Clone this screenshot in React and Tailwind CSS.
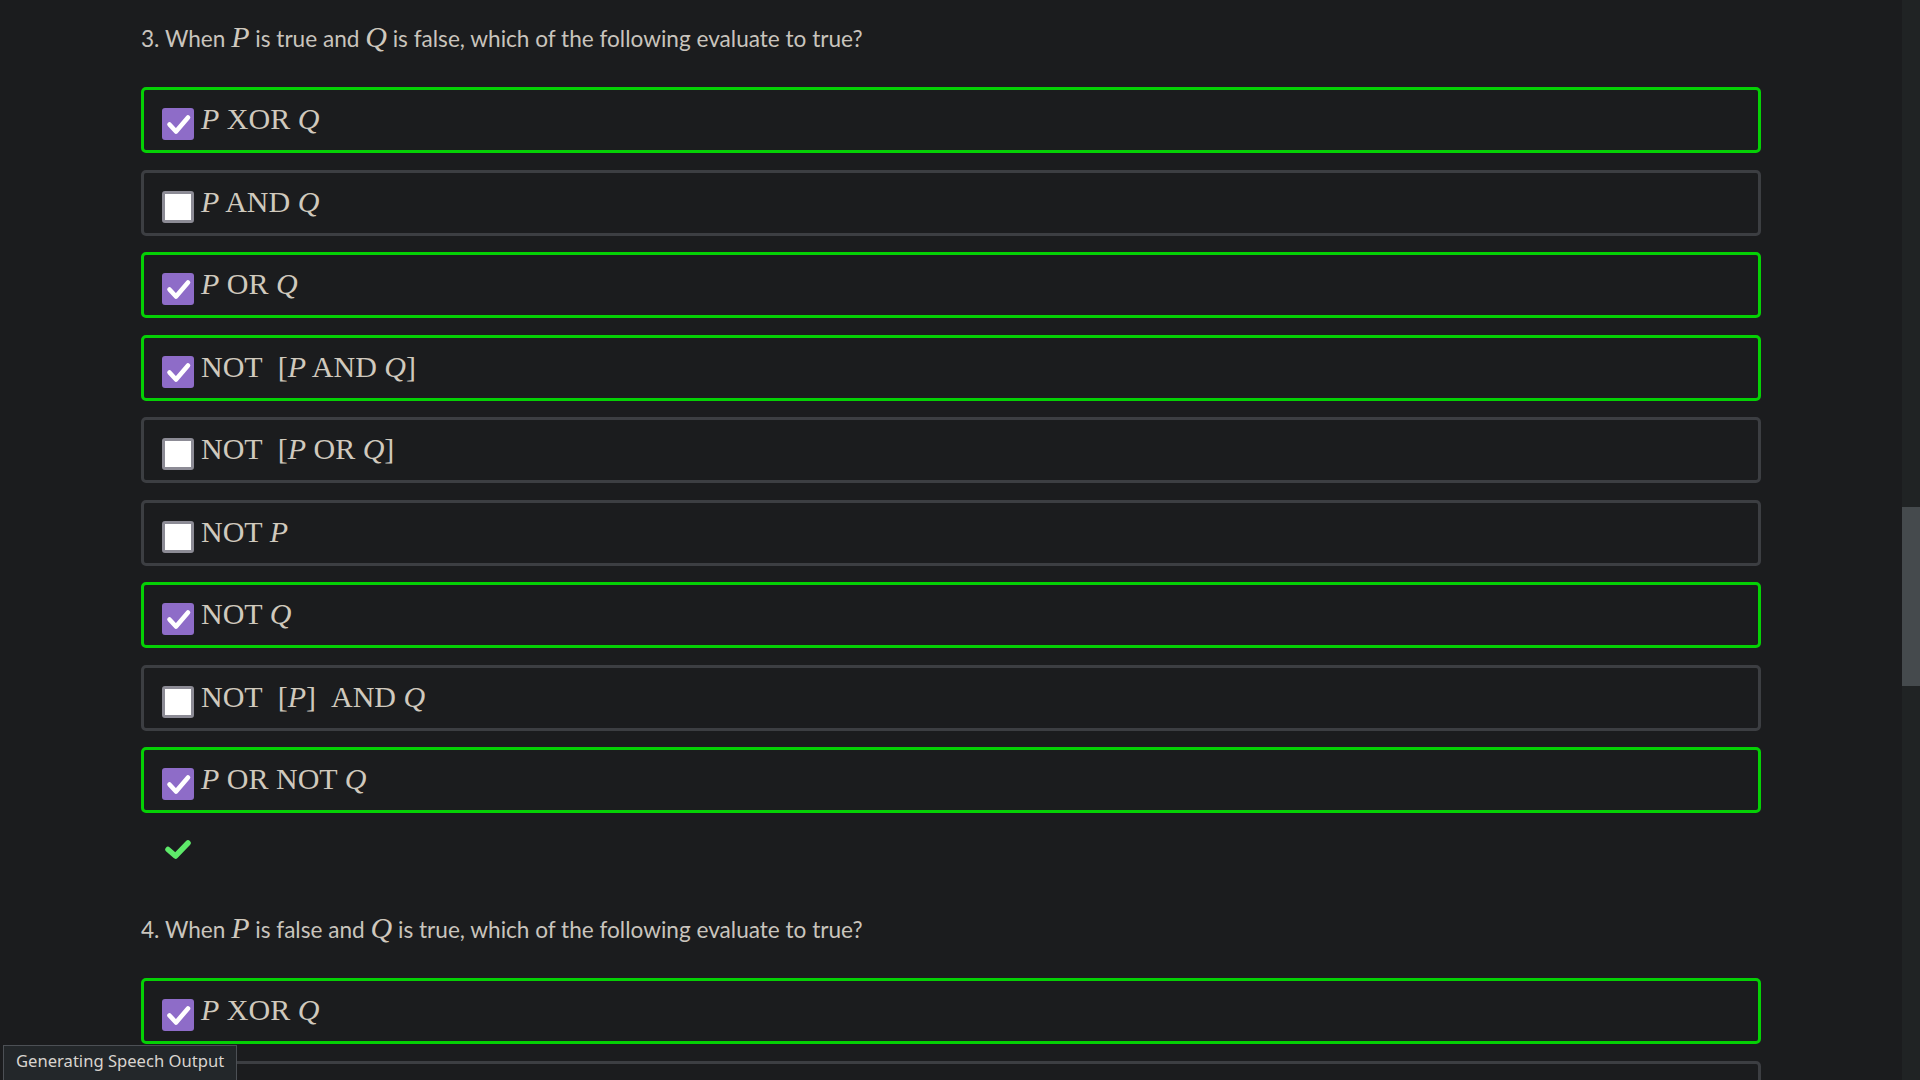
import React from "react";

const I = ({ children }) => <span className="italic">{children}</span>;

const opts3 = [
  { c: true, t: <><I>P</I> XOR <I>Q</I></> },
  { c: false, t: <><I>P</I> AND <I>Q</I></> },
  { c: true, t: <><I>P</I> OR <I>Q</I></> },
  { c: true, t: <>NOT{"\u00a0\u00a0"}[<I>P</I> AND <I>Q</I>]</> },
  { c: false, t: <>NOT{"\u00a0\u00a0"}[<I>P</I> OR <I>Q</I>]</> },
  { c: false, t: <>NOT <I>P</I></> },
  { c: true, t: <>NOT <I>Q</I></> },
  { c: false, t: <>NOT{"\u00a0\u00a0"}[<I>P</I>]{"\u00a0\u00a0"}AND <I>Q</I></> },
  { c: true, t: <><I>P</I> OR NOT <I>Q</I></> },
];

function Box({ checked }) {
  if (checked) {
    return (
      <div className="w-[32px] h-[32px] shrink-0 rounded-[3px] bg-[#8e6cc8] flex items-center justify-center">
        <svg width="32" height="32" viewBox="0 0 32 32">
          <polyline points="7.5,16.5 14,23.5 26,9.5" fill="none" stroke="#ffffff" strokeWidth="4.6" strokeLinecap="round" strokeLinejoin="round" />
        </svg>
      </div>
    );
  }
  return <div className="w-[32px] h-[32px] shrink-0 rounded-[3px] bg-white border-[3px] border-[#8c8b95]" />;
}

function Option({ c, t }) {
  return (
    <div className={`h-[66px] shrink-0 rounded-[5px] border-[3px] ${c ? "border-[#05d005]" : "border-[#3c3e42]"} flex items-start pl-[18px] pt-[18px]`}>
      <Box checked={c} />
      <div className="ml-[7px] text-[30px] leading-[22px] text-[#d0c9bd] whitespace-pre" style={{ fontFamily: '"Liberation Serif", "DejaVu Serif", serif' }}>
        {t}
      </div>
    </div>
  );
}

function Question({ n, a, b }) {
  return (
    <p className="h-[36px] text-[22.6px] leading-[36px] text-[#c9c4bd] whitespace-nowrap" style={{ fontFamily: 'Lato, "Noto Sans", sans-serif' }}>
      {n}. When{" "}
      <span className="italic text-[30px] leading-none text-[#cfc8bd]" style={{ fontFamily: '"Liberation Serif", serif' }}>P</span>{" "}
      is {a} and{" "}
      <span className="italic text-[30px] leading-none text-[#cfc8bd]" style={{ fontFamily: '"Liberation Serif", serif' }}>Q</span>{" "}
      is {b}, which of the following evaluate to true?
    </p>
  );
}

export default function App() {
  return (
    <div className="relative h-[1080px] w-full overflow-hidden bg-[#1b1c1e] flex">
      <main className="flex-1 px-[141px] flex flex-col">
        <div className="mt-[21px]">
          <Question n={3} a="true" b="false" />
        </div>
        <div className="mt-[30px] flex flex-col gap-[16.5px]">
          {opts3.map((o, i) => (
            <Option key={i} c={o.c} t={o.t} />
          ))}
        </div>
        <div className="mt-[26px] ml-[24px] h-[20px]">
          <svg width="26" height="20" viewBox="0 0 26 20">
            <polyline points="3,10.5 10.5,17 23,4" fill="none" stroke="#5ee96a" strokeWidth="5.5" strokeLinecap="round" strokeLinejoin="round" />
          </svg>
        </div>
        <div className="mt-[53px]">
          <Question n={4} a="false" b="true" />
        </div>
        <div className="mt-[30px] flex flex-col gap-[16.5px]">
          <Option c={true} t={<><I>P</I> XOR <I>Q</I></>} />
          <div className="h-[66px] shrink-0 rounded-[5px] border-[3px] border-[#3c3e42]" />
        </div>
      </main>
      <aside className="w-[18px] shrink-0 bg-[#202324] flex flex-col">
        <div className="mt-[507px] h-[179px] bg-[#454a4d]" />
      </aside>
      <div className="absolute left-[3px] top-[1045px] h-[50px] pl-[12px] pr-[12px] bg-[#23272a] border border-[#4c5055] text-[16.6px] leading-[30px] text-[#d8d4cf] whitespace-nowrap" style={{ fontFamily: '"Noto Sans", sans-serif' }}>
        Generating Speech Output
      </div>
    </div>
  );
}
